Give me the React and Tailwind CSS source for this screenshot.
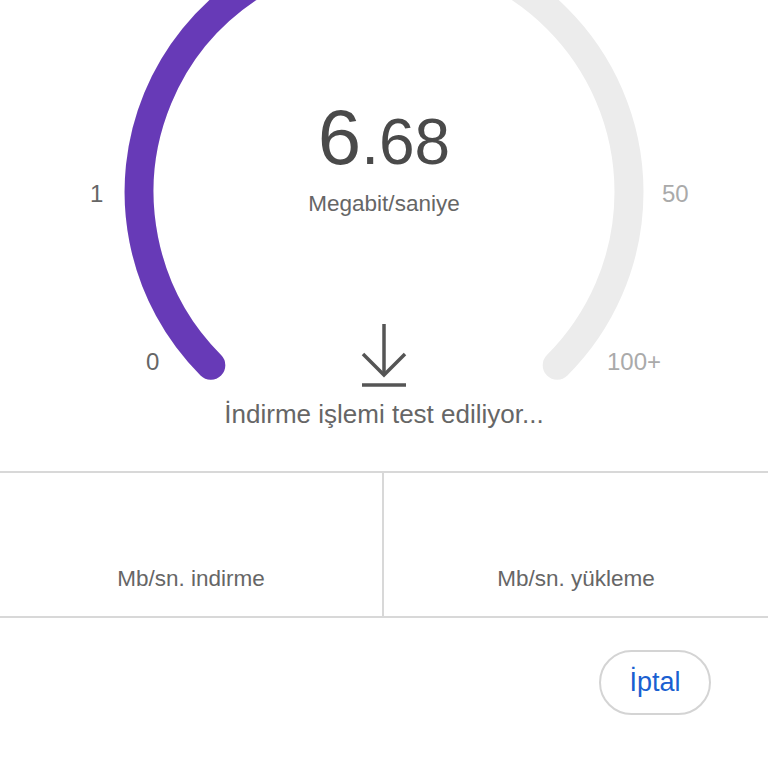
const FONT = { fontFamily: '"Liberation Sans", Arial, sans-serif' }

function Gauge() {
  // merkez (384,192), yarıçap 245, 270° yay
  return (
    <svg className="absolute inset-0" width="768" height="471" viewBox="0 0 768 471">
      <path
        d="M 210.8 365.2 A 245 245 0 1 1 557.2 365.2"
        fill="none"
        stroke="#ececec"
        strokeWidth="29"
        strokeLinecap="round"
      />
      <path
        d="M 210.8 365.2 A 245 245 0 0 1 384 -53"
        fill="none"
        stroke="#673ab7"
        strokeWidth="29"
        strokeLinecap="round"
      />
    </svg>
  )
}

function DownloadIcon() {
  return (
    <svg width="48" height="66" viewBox="0 0 48 66" fill="none" stroke="#555" strokeWidth="3.5">
      <path d="M24 2 V53" />
      <path d="M3 32 L24 53 L45 32" />
      <path d="M2 63 H46" />
    </svg>
  )
}

export default function App() {
  return (
    <div className="w-[768px] h-[768px] bg-white flex flex-col overflow-hidden" style={FONT}>
      {/* gösterge */}
      <section className="relative h-[471px] shrink-0 flex flex-col items-center">
        <Gauge />
        <span className="absolute left-[90px] top-[176px] text-[24px] text-[#666]">1</span>
        <span className="absolute left-[146px] top-[344px] text-[24px] text-[#666]">0</span>
        <span className="absolute left-[662px] top-[176px] text-[24px] text-[#aaa]">50</span>
        <span className="absolute left-[607px] top-[344px] text-[24px] text-[#aaa]">100+</span>

        <div className="relative mt-[98px] flex items-baseline text-[#4a4a4a] leading-none">
          <span className="text-[78px]">6</span>
          <span className="text-[64px]">.68</span>
        </div>
        <p className="relative mt-[17px] text-[22.5px] text-[#666] leading-none">Megabit/saniye</p>

        <div className="relative mt-[106px]">
          <DownloadIcon />
        </div>
        <p className="relative mt-[13px] text-[26px] text-[#666] leading-none">İndirme işlemi test ediliyor...</p>
      </section>

      {/* sonuçlar */}
      <div className="grid grid-cols-2 h-[147px] border-y-2 border-[#d8d8d8] shrink-0">
        <div className="flex items-end justify-center pb-[20px] border-r-2 border-[#d8d8d8]">
          <span className="text-[22.5px] text-[#666]">Mb/sn. indirme</span>
        </div>
        <div className="flex items-end justify-center pb-[20px]">
          <span className="text-[22.5px] text-[#666]">Mb/sn. yükleme</span>
        </div>
      </div>

      <div className="flex justify-end pr-[57px] pt-[32px]">
        <button className="w-[112px] h-[65px] rounded-full border-2 border-[#d4d4d4] text-[#1a5fd1] text-[27px]">
          İptal
        </button>
      </div>
    </div>
  )
}
